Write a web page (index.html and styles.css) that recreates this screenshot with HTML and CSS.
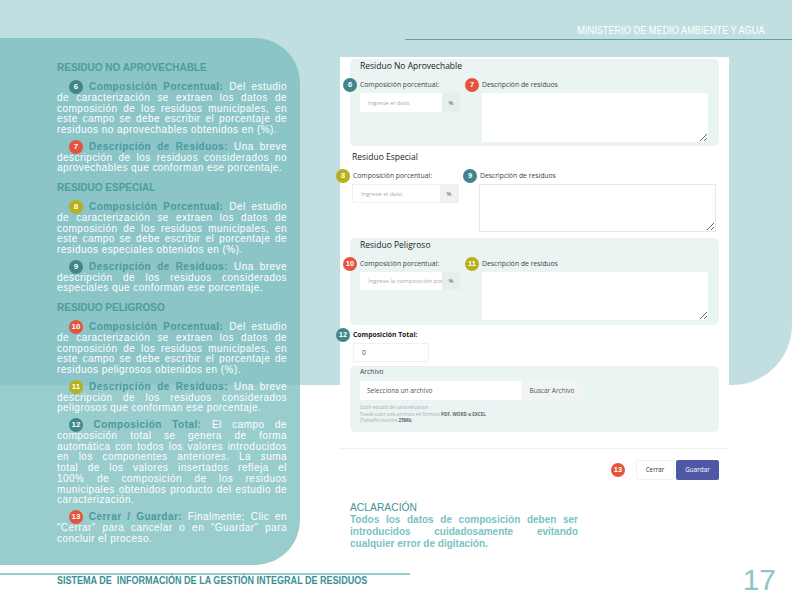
FILE: index.html
```html
<!DOCTYPE html>
<html lang="es">
<head>
<meta charset="utf-8">
<title>Residuos</title>
<link rel="stylesheet" href="styles.css">
</head>
<body>
<div class="page">
  <header class="top"><span class="ministry"><span class="ministry-text">MINISTERIO DE MEDIO AMBIENTE Y AGUA</span></span></header>
  <main class="main">
    <aside class="guide">
      <h2 class="g-head">RESIDUO NO APROVECHABLE</h2>
      <p class="g-p"><span class="gb teal">6</span> <b>Composición Porcentual:</b> Del estudio de caracterización se extraen los datos de composición de los residuos municipales, en este campo se debe escribir el porcentaje de residuos no aprovechables obtenidos en (%).</p>
      <p class="g-p"><span class="gb red">7</span> <b>Descripción de Residuos:</b> Una breve descripción de los residuos considerados no aprovechables que conforman ese porcentaje.</p>
      <h2 class="g-head">RESIDUO ESPECIAL</h2>
      <p class="g-p"><span class="gb olive">8</span> <b>Composición Porcentual:</b> Del estudio de caracterización se extraen los datos de composición de los residuos municipales, en este campo se debe escribir el porcentaje de residuos especiales obtenidos en (%).</p>
      <p class="g-p"><span class="gb teal">9</span> <b>Descripción de Residuos:</b> Una breve descripción de los residuos considerados especiales que conforman ese porcentaje.</p>
      <h2 class="g-head">RESIDUO PELIGROSO</h2>
      <p class="g-p"><span class="gb red">10</span> <b>Composición Porcentual:</b> Del estudio de caracterización se extraen los datos de composición de los residuos municipales, en este campo se debe escribir el porcentaje de residuos peligrosos obtenidos en (%).</p>
      <p class="g-p"><span class="gb olive">11</span> <b>Descripción de Residuos:</b> Una breve descripción de los residuos considerados peligrosos que conforman ese porcentaje.</p>
      <p class="g-p"><span class="gb teal">12</span> <b>Composición Total:</b> El campo de composición total se genera de forma automática con todos los valores introducidos en los componentes anteriores. La suma total&nbsp;de los valores insertados refleja el 100%&nbsp;de composición de los residuos municipales obtenidos producto del estudio de caracterización.</p>
      <p class="g-p"><span class="gb red">13</span> <b>Cerrar / Guardar:</b> Finalmente; Clic en “Cerrar” para cancelar o en “Guardar” para concluir el proceso.</p>
    </aside>

    <section class="card">
      <div class="box">
        <h3 class="sec-title">Residuo No Aprovechable</h3>
        <div class="row">
          <div class="field">
            <label class="lbl"><span class="fb teal">6</span>Composición porcentual:</label>
            <div class="igroup"><input class="inp" type="text" placeholder="Ingrese el dato"><span class="addon">%</span></div>
          </div>
          <div class="field">
            <label class="lbl"><span class="fb red">7</span>Descripción de residuos</label>
            <textarea class="ta"></textarea>
          </div>
        </div>
      </div>

      <div class="plain">
        <h3 class="sec-title">Residuo Especial</h3>
        <div class="row">
          <div class="field">
            <label class="lbl"><span class="fb olive">8</span>Composición porcentual:</label>
            <div class="igroup"><input class="inp" type="text" placeholder="Ingrese el dato"><span class="addon">%</span></div>
          </div>
          <div class="field">
            <label class="lbl"><span class="fb teal">9</span>Descripción de residuos</label>
            <textarea class="ta"></textarea>
          </div>
        </div>
      </div>

      <div class="box box-3">
        <h3 class="sec-title">Residuo Peligroso</h3>
        <div class="row">
          <div class="field">
            <label class="lbl"><span class="fb red">10</span>Composición porcentual:</label>
            <div class="igroup"><input class="inp" type="text" placeholder="Ingrese la composición porcentual"><span class="addon">%</span></div>
          </div>
          <div class="field">
            <label class="lbl"><span class="fb olive">11</span>Descripción de residuos</label>
            <textarea class="ta"></textarea>
          </div>
        </div>
      </div>

      <div class="total">
        <label class="lbl lbl-strong"><span class="fb teal">12</span>Composición Total:</label>
        <input class="inp inp-total" type="text" value="0">
      </div>

      <div class="box file-box">
        <div class="file-title">Archivo</div>
        <div class="file-row">
          <span class="file-name">Selecciona un archivo</span>
          <span class="file-btn">Buscar Archivo</span>
        </div>
        <div class="help">
          <div>Subir estudio de caracterizacion</div>
          <div>Puede subir solo archivos en formato <b>PDF, WORD o EXCEL</b></div>
          <div>(Tamaño máximo <b>25Mb</b>)</div>
        </div>
      </div>

      <div class="actions">
        <span class="fb-inline red">13</span>
        <button class="btn btn-close" type="button">Cerrar</button>
        <button class="btn btn-save" type="button">Guardar</button>
      </div>

      <div class="note">
        <div class="note-title">ACLARACIÓN</div>
        <p class="note-text">Todos los datos de composición deben ser introducidos cuidadosamente evitando cualquier error de digitación.</p>
      </div>
    </section>
  </main>
  <footer class="foot">
    <div class="foot-left"><span class="foot-text">SISTEMA DE&nbsp; INFORMACIÓN DE LA GESTIÓN INTEGRAL DE RESIDUOS</span></div>
    <div class="page-num">17</div>
  </footer>
</div>
</body>
</html>
```

FILE: styles.css
```css
* { box-sizing: border-box; }
html, body { margin: 0; padding: 0; }
body {
  background: #ffffff;
  font-family: "Liberation Sans", Arial, sans-serif;
}
.page {
  position: relative;
  width: 792px;
  height: 612px;
  overflow: hidden;
}
.page::before {
  content: "";
  position: absolute;
  left: 0;
  top: 0;
  width: 792px;
  height: 385px;
  background: #c1dfe0;
  border-bottom-right-radius: 60px;
}

/* header */
.top {
  position: relative;
  height: 40px;
  display: flex;
  justify-content: flex-end;
  align-items: flex-end;
}
.ministry {
  width: 387px;
  text-align: right;
  padding: 0 27px 3px 0;
  border-bottom: 1.5px solid #5fa3a6;
  color: #ffffff;
  font-size: 10px;
  line-height: 10px;
  white-space: nowrap;
}
.ministry-text {
  display: inline-block;
  transform: scaleX(0.92);
  transform-origin: right center;
}

/* main */
.main {
  position: relative;
  display: flex;
  align-items: flex-start;
  margin-top: -2px;
  height: 527px;
}

/* left guide */
.guide {
  flex: none;
  width: 300px;
  height: 527px;
  padding: 24px 13px 0 57px;
  background: rgba(125, 190, 191, 0.79);
  border-radius: 0 45px 45px 0;
  color: #ffffff;
  font-size: 10px;
}
.g-head {
  margin: 8px 0 9px;
  font-size: 10px;
  line-height: 11px;
  font-weight: bold;
  color: #4f9c9e;
}
.g-head:first-child { margin-top: 0; }
.g-p {
  margin: 0 0 6px;
  line-height: 10.75px;
  text-align: justify;
  text-indent: 12px;
  letter-spacing: 0.45px;
}
.g-p b { color: #4b999e; }
.gb {
  display: inline-flex;
  align-items: center;
  justify-content: center;
  width: 14px;
  height: 14px;
  margin: -5px 0;
  vertical-align: middle;
  border-radius: 50%;
  color: #ffffff;
  font-size: 8px;
  font-weight: bold;
  text-indent: 0;
  letter-spacing: 0;
  line-height: 1;
}
.teal { background: #3f868c; }
.red { background: #e4533b; }
.olive { background: #b6b01d; }

/* form card */
.card {
  flex: none;
  width: 389px;
  margin: 19px 0 0 40px;
  padding: 2px 10px 0;
  background: #ffffff;
  font-family: "Open Sans", "Liberation Sans", sans-serif;
  color: #333333;
}
.box {
  background: #eaf4f3;
  border-radius: 5px;
  padding: 0 11px 4px 10px;
}
.sec-title {
  margin: 0;
  font-size: 8.5px;
  line-height: 13px;
  font-weight: 500;
  color: #222222;
}
.row {
  display: grid;
  grid-template-columns: 100px 1fr;
  column-gap: 22px;
  margin-top: 8px;
}
.field { display: flex; flex-direction: column; }
.lbl {
  position: relative;
  display: block;
  font-size: 6.8px;
  line-height: 10px;
  color: #444444;
  margin-bottom: 3px;
  white-space: nowrap;
}
.lbl-strong { font-weight: bold; color: #222222; }
.fb {
  position: absolute;
  left: -17px;
  top: -2px;
  width: 14px;
  height: 14px;
  border-radius: 50%;
  display: flex;
  align-items: center;
  justify-content: center;
  color: #ffffff;
  font-size: 7.5px;
  font-weight: bold;
  font-family: "Liberation Sans", sans-serif;
}
.igroup { display: flex; height: 19px; }
.inp {
  flex: 1;
  min-width: 0;
  height: 19px;
  border: none;
  background: #ffffff;
  padding: 0 0 0 8px;
  font-family: "Open Sans", sans-serif;
  font-size: 6px;
  color: #555555;
  outline: none;
}
.inp::placeholder { color: #aaaaaa; }
.addon {
  flex: none;
  width: 18px;
  background: #e8eeee;
  color: #555555;
  font-size: 6px;
  display: flex;
  align-items: center;
  justify-content: center;
}
.ta {
  display: block;
  width: 100%;
  height: 49px;
  border: none;
  background: #ffffff;
  resize: both;
  outline: none;
}

/* plain section */
.plain { padding: 4px 3px 0 2px; }
.plain .row { grid-template-columns: 107px 1fr; column-gap: 20px; }
.plain .lbl { margin-left: 1px; }
.plain .igroup { border: 1px solid #eef1f1; }
.plain .inp { height: 17px; }
.plain .addon { background: #f0f2f2; }
.plain .ta { border: 1px solid #e6eaea; height: 48px; }

.box-3 { margin-top: 6px; padding-bottom: 5px; }
.box-3 .ta { height: 48px; }
.box-3 .igroup { height: 18px; }
.box-3 .inp { height: 18px; }

/* total */
.total { padding: 5px 3px 4px; }
.inp-total {
  display: block;
  width: 76px;
  height: 19px;
  flex: none;
  border: 1px solid #eef1f1;
  font-size: 6.5px;
  color: #444444;
}

/* file */
.file-box { padding: 0 10px 8px; }
.file-title { font-size: 6.8px; line-height: 12px; color: #444444; }
.file-row { display: flex; margin-top: 3px; height: 19px; }
.file-name {
  width: 161px;
  background: #ffffff;
  padding-left: 7px;
  display: flex;
  align-items: center;
  font-size: 6.5px;
  color: #555555;
}
.file-btn {
  width: 62px;
  background: #f1f4f4;
  display: flex;
  align-items: center;
  justify-content: center;
  font-size: 6.5px;
  color: #555555;
}
.help {
  margin-top: 4px;
  font-size: 4.6px;
  line-height: 6.5px;
  color: #a9afaf;
}
.help b { color: #666666; }

/* actions */
.actions {
  display: flex;
  justify-content: flex-end;
  align-items: center;
  gap: 2px;
  margin: 16px -10px 0;
  padding: 11px 10px 0;
  border-top: 1px solid #eef1f1;
}
.fb-inline {
  width: 14px;
  height: 14px;
  border-radius: 50%;
  display: flex;
  align-items: center;
  justify-content: center;
  color: #ffffff;
  font-size: 7.5px;
  font-weight: bold;
  font-family: "Liberation Sans", sans-serif;
  margin-right: 9px;
}
.btn {
  height: 20px;
  border-radius: 2px;
  font-family: "Open Sans", sans-serif;
  font-size: 6.3px;
  padding: 0;
  cursor: pointer;
}
.btn-close {
  width: 38px;
  background: #ffffff;
  border: 1px solid #f0f2f2;
  color: #333333;
}
.btn-save {
  width: 43px;
  background: #4f58a6;
  border: none;
  color: #ffffff;
}

/* note */
.note { margin-top: 21px; }
.note-title {
  font-family: "Liberation Sans", sans-serif;
  font-size: 10.3px;
  line-height: 13px;
  color: #3f9496;
}
.note-text {
  margin: 0;
  width: 228px;
  font-family: "Liberation Sans", sans-serif;
  font-size: 10px;
  line-height: 12px;
  font-weight: bold;
  color: #7ac3c4;
  text-align: justify;
}

/* footer */
.foot {
  position: relative;
  display: flex;
  align-items: flex-start;
  height: 47px;
}
.foot-left {
  width: 410px;
  margin-top: 8px;
  border-top: 2px solid #98cece;
  padding-left: 57px;
  font-weight: bold;
  font-size: 10.5px;
  line-height: 10px;
  color: #3b8e94;
  white-space: nowrap;
}
.foot-text {
  display: inline-block;
  transform: scaleX(0.86);
  transform-origin: left center;
}
.page-num {
  margin-left: auto;
  padding-right: 16px;
  font-size: 30px;
  line-height: 30px;
  color: #8ec4c8;
}
```
